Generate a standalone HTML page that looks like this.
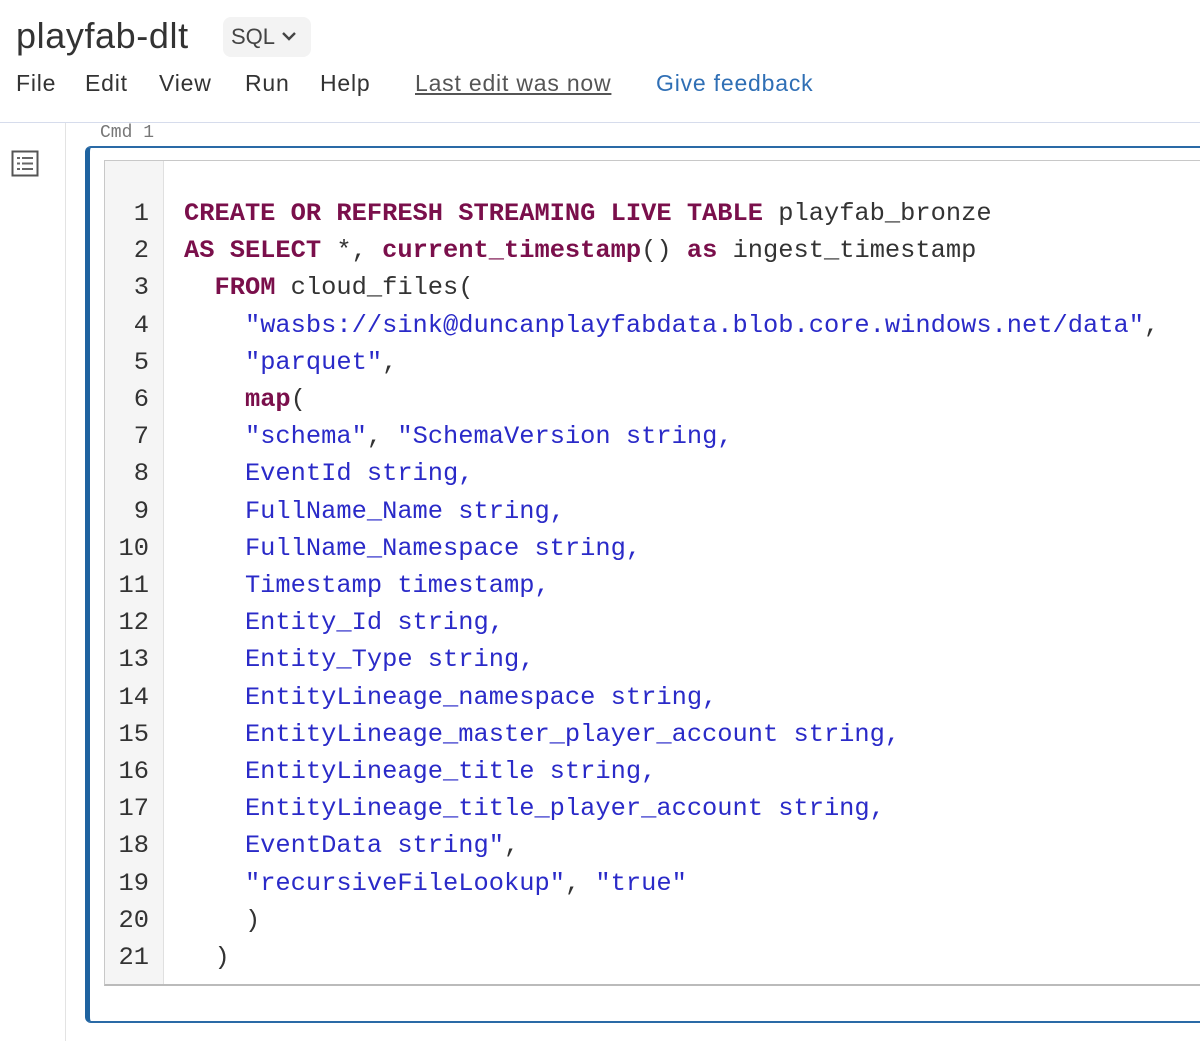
<!DOCTYPE html>
<html><head><meta charset="utf-8"><style>
html,body{margin:0;padding:0;background:#fff;width:1200px;height:1041px;overflow:hidden;position:relative;font-family:"Liberation Sans",sans-serif}
.abs{position:absolute}
.title{left:16px;top:15px;font-size:36px;color:#333;letter-spacing:0.6px}
.sql{left:223px;top:17px;width:88px;height:40px;background:#f3f3f3;border-radius:8px;font-size:22px;color:#444;line-height:40px;padding-left:8px;box-sizing:border-box}
.menu{top:70px;font-size:23px;color:#333;letter-spacing:0.8px}
.hr{left:0;top:122px;width:1200px;height:1px;background:#d6dcec}
.vr{left:65px;top:123px;width:1px;height:918px;background:#e3e3e3}
.cmd{left:100px;top:123px;font-family:"Liberation Mono",monospace;font-size:18px;color:#777}
.cell{left:85px;top:146px;width:1130px;height:877px;border:2px solid #2a6aa6;border-left:5px solid #1f63a0;border-radius:6px 0 0 6px;box-sizing:border-box}
.ed{left:104px;top:160px;width:1110px;height:826px;border:1px solid #c8c8c8;border-bottom:2px solid #bbb;box-sizing:border-box}
.gut{left:105px;top:161px;width:58px;height:823px;background:#f5f5f5;border-right:1px solid #e0e0e0}
pre{margin:0;font-family:"Liberation Mono",monospace;font-size:25.4px;line-height:37.2px}
.ln{left:105px;top:195px;width:44px;text-align:right;color:#333}
.code{left:184px;top:195px;color:#333}
.k{color:#7a0f4b;font-weight:bold}
.s{color:#2a2ac8}
</style></head><body>
<div class="abs title">playfab-dlt</div>
<div class="abs sql">SQL <svg width="18" height="12" viewBox="0 0 18 12" style="vertical-align:2px"><path d="M3 3l6 6 6-6" stroke="#444" stroke-width="2.4" fill="none"/></svg></div>
<div class="abs menu" style="left:16px">File</div>
<div class="abs menu" style="left:85px">Edit</div>
<div class="abs menu" style="left:159px">View</div>
<div class="abs menu" style="left:245px">Run</div>
<div class="abs menu" style="left:320px">Help</div>
<div class="abs menu" style="left:415px;color:#555;text-decoration:underline">Last edit was now</div>
<div class="abs menu" style="left:656px;color:#2f6fb5">Give feedback</div>
<div class="abs hr"></div>
<div class="abs vr"></div>
<svg class="abs" style="left:11px;top:150px" width="29" height="28" viewBox="0 0 29 28"><rect x="1.5" y="1.5" width="25" height="24" fill="none" stroke="#555" stroke-width="2"/><g fill="#666"><rect x="6" y="7" width="3" height="2"/><rect x="11" y="7" width="11" height="2"/><rect x="6" y="12.5" width="3" height="2"/><rect x="11" y="12.5" width="11" height="2"/><rect x="6" y="18" width="3" height="2"/><rect x="11" y="18" width="11" height="2"/></g></svg>
<div class="abs cmd">Cmd 1</div>
<div class="abs cell"></div>
<div class="abs ed"></div>
<div class="abs gut"></div>
<pre class="abs ln">1
2
3
4
5
6
7
8
9
10
11
12
13
14
15
16
17
18
19
20
21</pre>
<pre class="abs code"><span class="k">CREATE OR REFRESH STREAMING LIVE TABLE</span> playfab_bronze
<span class="k">AS SELECT</span> *, <span class="k">current_timestamp</span>() <span class="k">as</span> ingest_timestamp
  <span class="k">FROM</span> cloud_files(
    <span class="s">"wasbs://sink@duncanplayfabdata.blob.core.windows.net/data"</span>,
    <span class="s">"parquet"</span>,
    <span class="k">map</span>(
    <span class="s">"schema"</span>, <span class="s">"SchemaVersion string,
    EventId string,
    FullName_Name string,
    FullName_Namespace string,
    Timestamp timestamp,
    Entity_Id string,
    Entity_Type string,
    EntityLineage_namespace string,
    EntityLineage_master_player_account string,
    EntityLineage_title string,
    EntityLineage_title_player_account string,
    EventData string"</span>,
    <span class="s">"recursiveFileLookup"</span>, <span class="s">"true"</span>
    )
  )</pre>
</body></html>
